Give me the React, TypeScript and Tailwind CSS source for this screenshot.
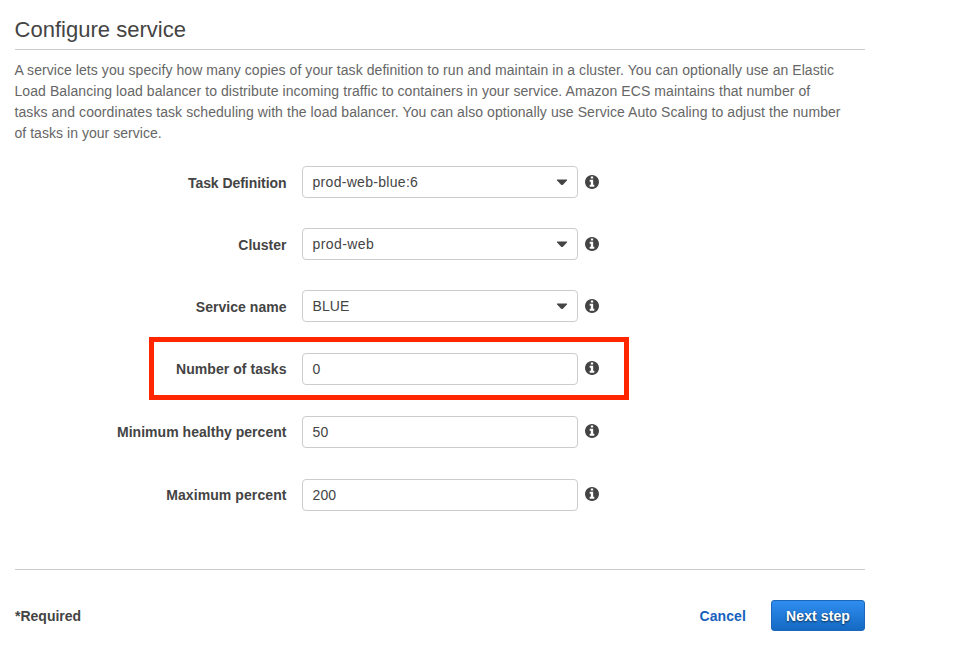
type Field = {
  label: string;
  labelClass: string;
  value: string;
  valueClass: string;
  rowClass: string;
  select?: boolean;
  highlight?: boolean;
};

const fields: Field[] = [
  { label: "Task Definition", labelClass: "tracking-[-0.05px]", value: "prod-web-blue:6", valueClass: "tracking-[0.3px]", rowClass: "mb-[30px]", select: true },
  { label: "Cluster", labelClass: "tracking-normal", value: "prod-web", valueClass: "tracking-[0.42px]", rowClass: "mb-[30px]", select: true },
  { label: "Service name", labelClass: "tracking-[0.03px]", value: "BLUE", valueClass: "tracking-[0.05px]", rowClass: "mb-[31px]", select: true },
  { label: "Number of tasks", labelClass: "tracking-[0.05px]", value: "0", valueClass: "tracking-normal", rowClass: "mb-[31px]", highlight: true },
  { label: "Minimum healthy percent", labelClass: "tracking-[0.03px]", value: "50", valueClass: "tracking-[0.1px]", rowClass: "mb-[31px]" },
  { label: "Maximum percent", labelClass: "tracking-[0.08px]", value: "200", valueClass: "tracking-[0.1px]", rowClass: "mb-[31px]" },
];

function Caret() {
  return (
    <svg width="12" height="7" viewBox="0 0 12 7" className="shrink-0">
      <path d="M1.4 0.6H10.6Q11.5 0.8 10.9 1.5L6.9 5.7Q6 6.5 5.1 5.7L1.1 1.5Q0.5 0.8 1.4 0.6Z" fill="#444" />
    </svg>
  );
}

function InfoIcon({ className }: { className: string }) {
  return (
    <svg width="14" height="14" viewBox="0 128 1536 1536" fill="currentColor" className={className}>
      <path d="M1024 1376v-160q0-14-9-23t-23-9h-96v-512q0-14-9-23t-23-9h-320q-14 0-23 9t-9 23v160q0 14 9 23t23 9h96v320h-96q-14 0-23 9t-9 23v160q0 14 9 23t23 9h448q14 0 23-9t9-23zm-128-896v-160q0-14-9-23t-23-9h-192q-14 0-23 9t-9 23v160q0 14 9 23t23 9h192q14 0 23-9t9-23zm640 416q0 209-103 385.500t-279.500 279.500-385.500 103-385.500-103-279.500-279.500-103-385.500 103-385.500 279.500-279.500 385.500-103 385.500 103 279.500 279.500 103 385.500z" />
    </svg>
  );
}

function FieldRow({ field }: { field: Field }) {
  return (
    <div className={`relative flex h-8 items-center ${field.rowClass}`}>
      <label className={`w-[271.5px] whitespace-nowrap text-right font-bold leading-[21px] ${field.select ? "pt-[2px]" : ""} ${field.labelClass}`}>
        {field.label}
      </label>
      <div className="ml-[15.5px] flex h-8 w-[276px] items-center justify-between rounded-[4px] border border-[#ccc] bg-white pl-[9.5px] pr-[9px]">
        <span className={`whitespace-nowrap ${field.valueClass}`}>{field.value}</span>
        {field.select && <Caret />}
      </div>
      <InfoIcon className={`ml-[7px] shrink-0 ${field.select ? "" : "mb-[2px]"}`} />
      {field.highlight && (
        <div className="pointer-events-none absolute -top-4 left-[134px] h-[63px] w-[480px] border-[5px] border-[#ff2600]" />
      )}
    </div>
  );
}

export default function App() {
  return (
    <main className="h-[655px] w-[969px] overflow-hidden bg-white pl-[15px] font-['Liberation_Sans',Arial,sans-serif] text-[14px] leading-[21px] text-[#444]">
      <div className="w-[850px]">
        <h1 className="h-[50px] border-b border-[#ccc] pt-[15px] text-[22px] leading-[30px]">
          <span className="-ml-[0.5px] whitespace-nowrap tracking-[0.02px]">Configure service</span>
        </h1>
        <p className="-ml-[0.5px] mt-[10px] text-[#666]">
          <span className="block whitespace-nowrap tracking-[0.064px]">A service lets you specify how many copies of your task definition to run and maintain in a cluster. You can optionally use an Elastic</span>
          <span className="block whitespace-nowrap tracking-[0.08px]">Load Balancing load balancer to distribute incoming traffic to containers in your service. Amazon ECS maintains that number of</span>
          <span className="block whitespace-nowrap tracking-[0.074px]">tasks and coordinates task scheduling with the load balancer. You can also optionally use Service Auto Scaling to adjust the number</span>
          <span className="block whitespace-nowrap tracking-[0.04px]">of tasks in your service.</span>
        </p>
        <form className="flex flex-col pt-[22px]">
          {fields.map((field) => (
            <FieldRow key={field.label} field={field} />
          ))}
        </form>
        <footer className="mt-[27px] flex items-center border-t border-[#ccc] pt-[30px]">
          <span className="pt-[2px] font-bold">*Required</span>
          <a className="ml-auto pt-[2px] font-bold tracking-[0.1px] text-[#1862bd]">Cancel</a>
          <button
            type="button"
            className="ml-[25px] h-[31px] w-[94px] whitespace-nowrap rounded-[3px] border border-[#1a66b8] bg-linear-to-b from-[#2f8def] to-[#146ac4] pt-[2px] font-bold tracking-[0.1px] text-white [text-shadow:0_1px_2px_rgba(0,0,0,0.65)]"
          >
            Next step
          </button>
        </footer>
      </div>
    </main>
  );
}
